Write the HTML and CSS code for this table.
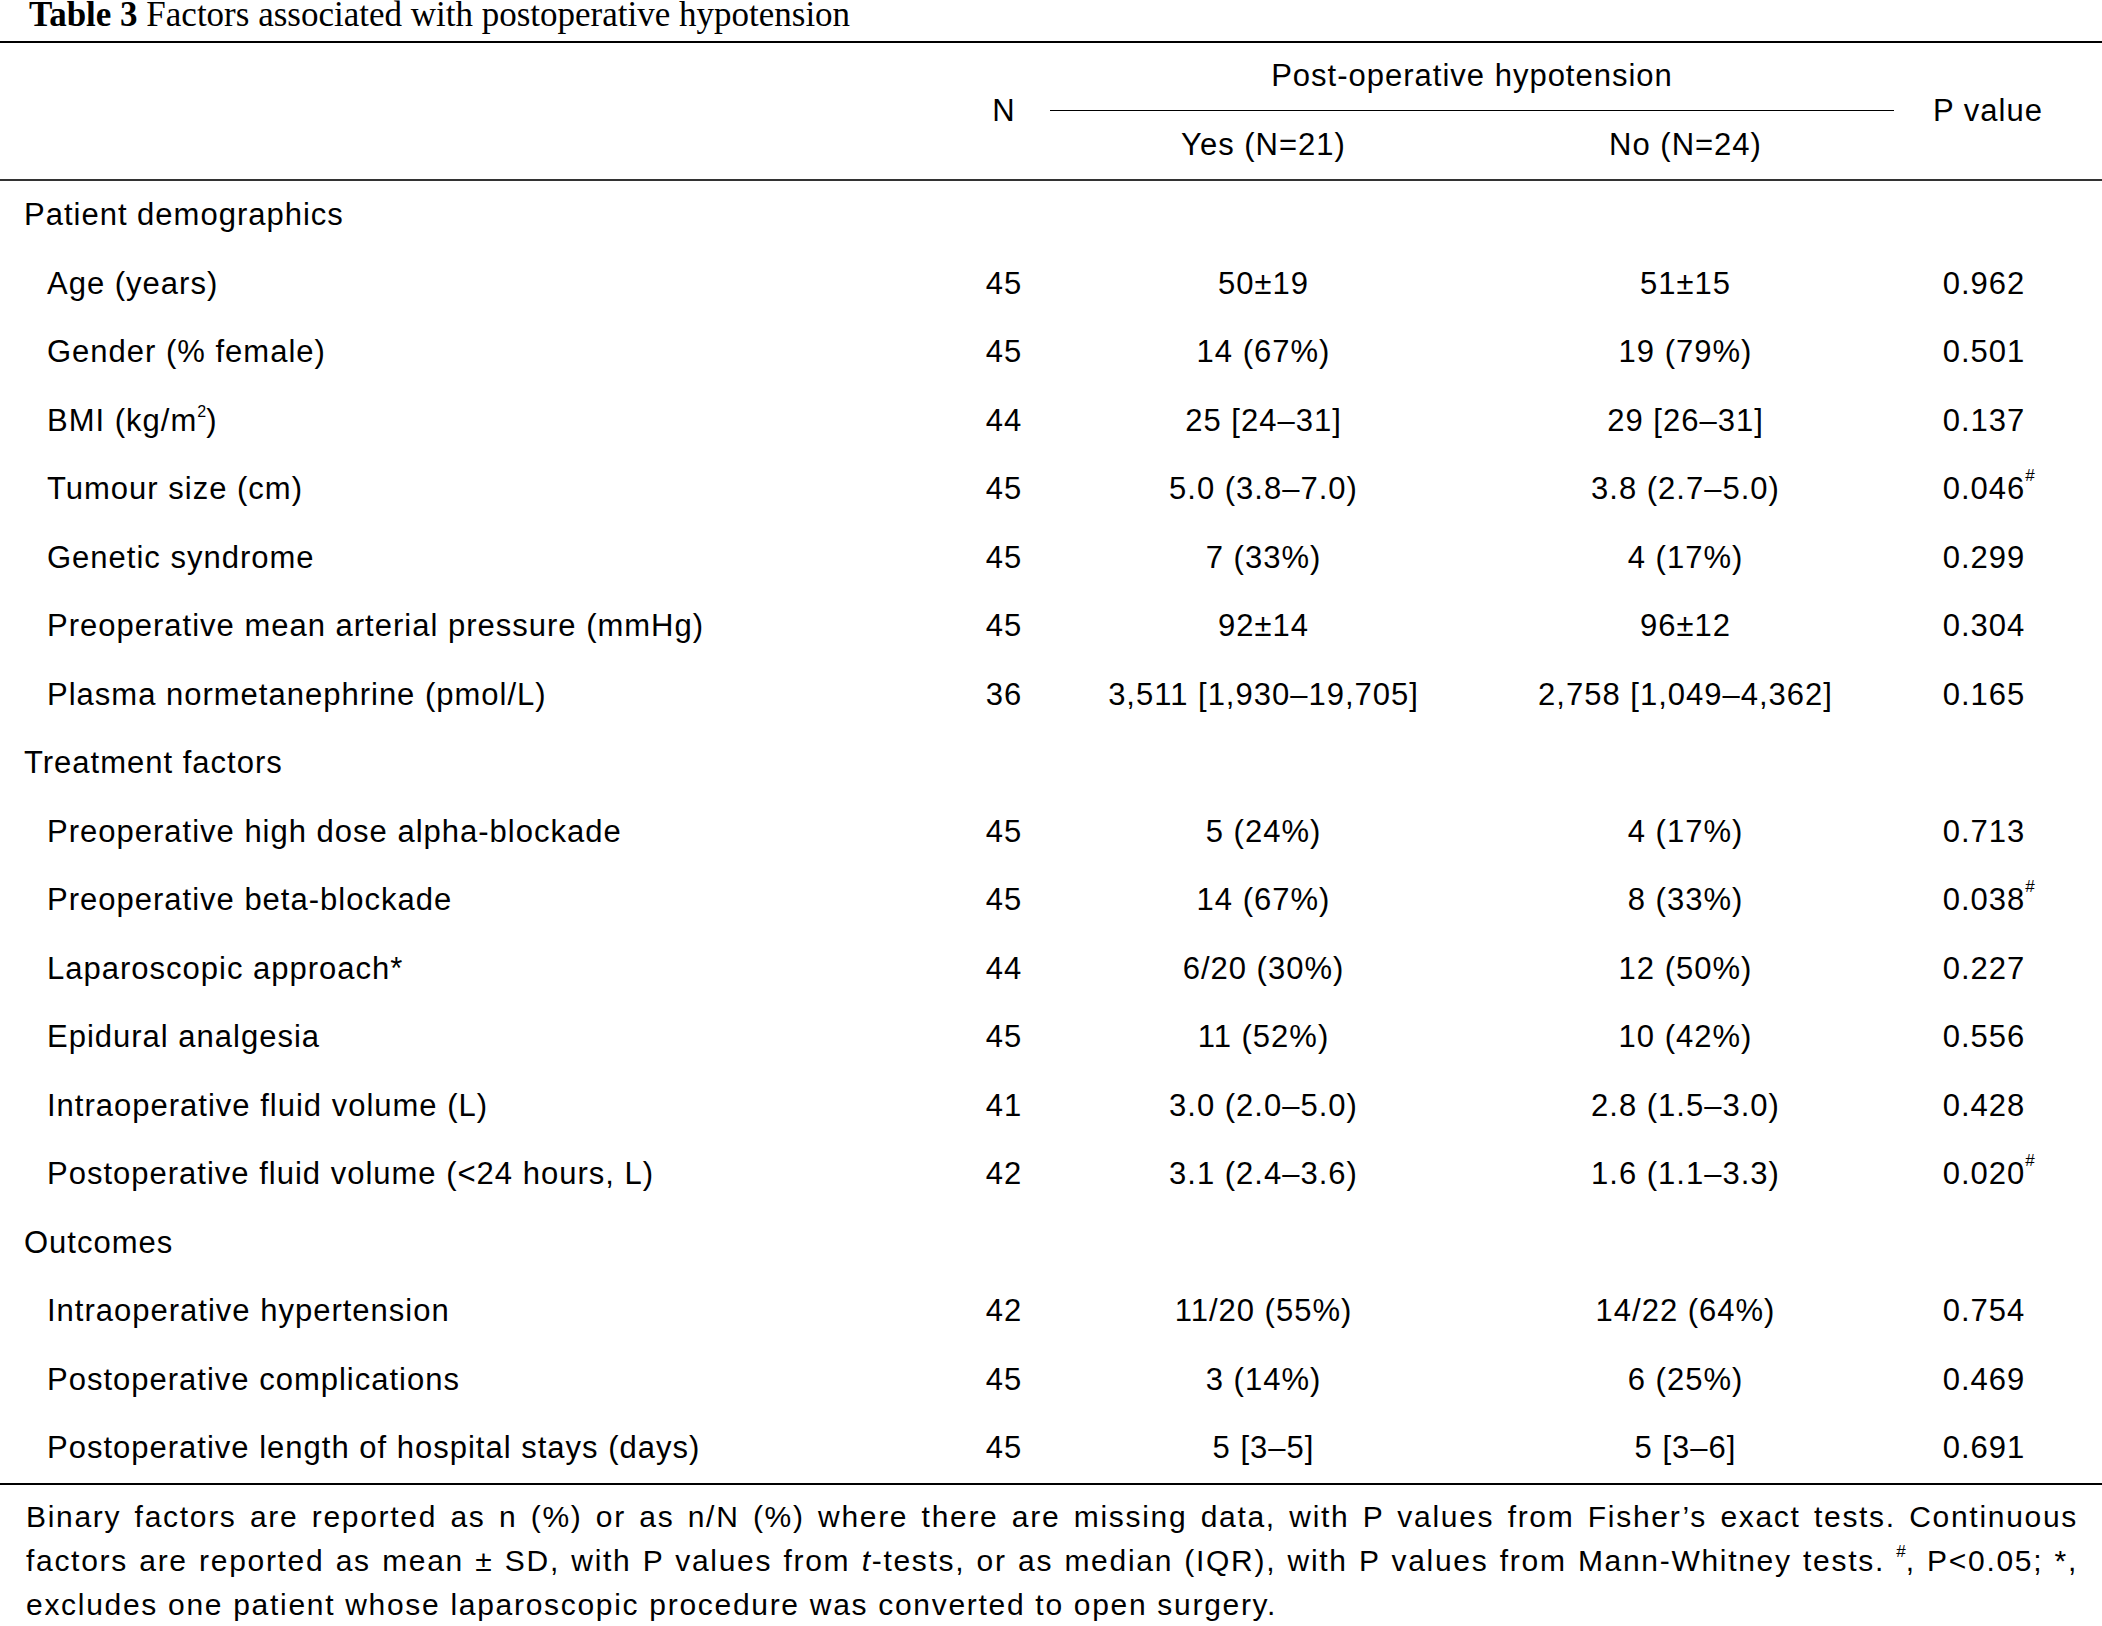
FILE: index.html
```html
<!DOCTYPE html>
<html lang="en">
<head>
<meta charset="utf-8">
<title>Table 3</title>
<link rel="stylesheet" href="styles.css">
</head>
<body>
<div class="page">
  <div class="caption"><b>Table 3</b> Factors associated with postoperative hypotension</div>
  <table class="tbl">
    <colgroup>
      <col class="c-label"><col class="c-n"><col class="c-yes"><col class="c-no"><col class="c-p">
    </colgroup>
    <thead>
      <tr class="h1">
        <th></th>
        <th rowspan="2" class="num">N</th>
        <th colspan="2" class="span">Post-operative hypotension</th>
        <th rowspan="2" class="num pcol">P value</th>
      </tr>
      <tr class="h2">
        <th></th>
        <th class="num">Yes (N=21)</th>
        <th class="num">No (N=24)</th>
      </tr>
    </thead>
    <tbody>
      <tr class="grp"><td>Patient demographics</td><td></td><td></td><td></td><td></td></tr>
      <tr><td class="sub">Age (years)</td><td>45</td><td>50±19</td><td>51±15</td><td class="p">0.962</td></tr>
      <tr><td class="sub">Gender (% female)</td><td>45</td><td>14 (67%)</td><td>19 (79%)</td><td class="p">0.501</td></tr>
      <tr><td class="sub">BMI (kg/m<sup class="sq">2</sup>)</td><td>44</td><td>25 [24–31]</td><td>29 [26–31]</td><td class="p">0.137</td></tr>
      <tr><td class="sub">Tumour size (cm)</td><td>45</td><td>5.0 (3.8–7.0)</td><td>3.8 (2.7–5.0)</td><td class="p"><span class="pv">0.046<sup class="mark">#</sup></span></td></tr>
      <tr><td class="sub">Genetic syndrome</td><td>45</td><td>7 (33%)</td><td>4 (17%)</td><td class="p">0.299</td></tr>
      <tr><td class="sub">Preoperative mean arterial pressure (mmHg)</td><td>45</td><td>92±14</td><td>96±12</td><td class="p">0.304</td></tr>
      <tr><td class="sub">Plasma normetanephrine (pmol/L)</td><td>36</td><td>3,511 [1,930–19,705]</td><td>2,758 [1,049–4,362]</td><td class="p">0.165</td></tr>
      <tr class="grp"><td>Treatment factors</td><td></td><td></td><td></td><td></td></tr>
      <tr><td class="sub">Preoperative high dose alpha-blockade</td><td>45</td><td>5 (24%)</td><td>4 (17%)</td><td class="p">0.713</td></tr>
      <tr><td class="sub">Preoperative beta-blockade</td><td>45</td><td>14 (67%)</td><td>8 (33%)</td><td class="p"><span class="pv">0.038<sup class="mark">#</sup></span></td></tr>
      <tr><td class="sub">Laparoscopic approach*</td><td>44</td><td>6/20 (30%)</td><td>12 (50%)</td><td class="p">0.227</td></tr>
      <tr><td class="sub">Epidural analgesia</td><td>45</td><td>11 (52%)</td><td>10 (42%)</td><td class="p">0.556</td></tr>
      <tr><td class="sub">Intraoperative fluid volume (L)</td><td>41</td><td>3.0 (2.0–5.0)</td><td>2.8 (1.5–3.0)</td><td class="p">0.428</td></tr>
      <tr><td class="sub">Postoperative fluid volume (&lt;24 hours, L)</td><td>42</td><td>3.1 (2.4–3.6)</td><td>1.6 (1.1–3.3)</td><td class="p"><span class="pv">0.020<sup class="mark">#</sup></span></td></tr>
      <tr class="grp"><td>Outcomes</td><td></td><td></td><td></td><td></td></tr>
      <tr><td class="sub">Intraoperative hypertension</td><td>42</td><td>11/20 (55%)</td><td>14/22 (64%)</td><td class="p">0.754</td></tr>
      <tr><td class="sub">Postoperative complications</td><td>45</td><td>3 (14%)</td><td>6 (25%)</td><td class="p">0.469</td></tr>
      <tr><td class="sub">Postoperative length of hospital stays (days)</td><td>45</td><td>5 [3–5]</td><td>5 [3–6]</td><td class="p">0.691</td></tr>
    </tbody>
  </table>
  <p class="note">Binary factors are reported as n (%) or as n/N (%) where there are missing data, with P values from Fisher’s exact tests. Continuous factors are reported as mean ± SD, with P values from <i>t</i>-tests, or as median (IQR), with P values from Mann-Whitney tests. <sup class="fm">#</sup>, P&lt;0.05; *, excludes one patient whose laparoscopic procedure was converted to open surgery.</p>
</div>
</body>
</html>
```

FILE: styles.css
```css
html, body {
  margin: 0;
  padding: 0;
  background: #fff;
}

.page {
  width: 2102px;
  color: #000;
  font-family: "Liberation Sans", Arial, sans-serif;
}

.caption {
  font-family: "Liberation Serif", "Times New Roman", serif;
  font-size: 35px;
  line-height: 30px;
  height: 30px;
  padding-bottom: 11px;
  padding-left: 29px;
  white-space: nowrap;
}

.caption b {
  font-weight: bold;
}

.tbl {
  width: 2102px;
  table-layout: fixed;
  border-collapse: collapse;
  border-top: 2px solid #000;
  border-bottom: 2px solid #000;
  font-size: 31px;
  letter-spacing: 1px;
}

.tbl thead {
  border-bottom: 2px solid #333;
}

.c-label { width: 958px; }
.c-n { width: 92px; }
.c-yes { width: 427px; }
.c-no { width: 417px; }
.c-p { width: 208px; }

.tbl th {
  font-weight: normal;
  padding: 0;
}

.tbl thead tr.h1 {
  height: 68px;
}

.tbl thead tr.h2 {
  height: 70px;
}

.tbl th.num {
  text-align: center;
  vertical-align: middle;
}

.tbl th.pcol {
  padding-right: 20px;
}

.tbl th.span {
  border-bottom: 1.5px solid #000;
  vertical-align: middle;
  text-align: center;
}

.tbl td {
  height: 68.5px;
  padding: 0;
  text-align: center;
  vertical-align: middle;
  white-space: nowrap;
}

.tbl td:first-child {
  text-align: left;
  padding-left: 24px;
}

.tbl td.sub {
  padding-left: 47px;
}

.tbl td.p {
  padding-right: 28px;
}

.pv {
  position: relative;
}

.mark {
  position: absolute;
  left: 100%;
  top: -4px;
  font-size: 17px;
  line-height: 1;
  letter-spacing: 0;
}

.sq {
  font-size: 16px;
  vertical-align: 14px;
  line-height: 0;
  letter-spacing: 0;
}

.note {
  margin: 0;
  padding: 10px 24px 0 26px;
  font-size: 30px;
  letter-spacing: 1.7px;
  line-height: 44px;
  text-align: justify;
}

.fm {
  font-size: 17px;
  vertical-align: 14px;
  line-height: 0;
  letter-spacing: 0;
}
```
